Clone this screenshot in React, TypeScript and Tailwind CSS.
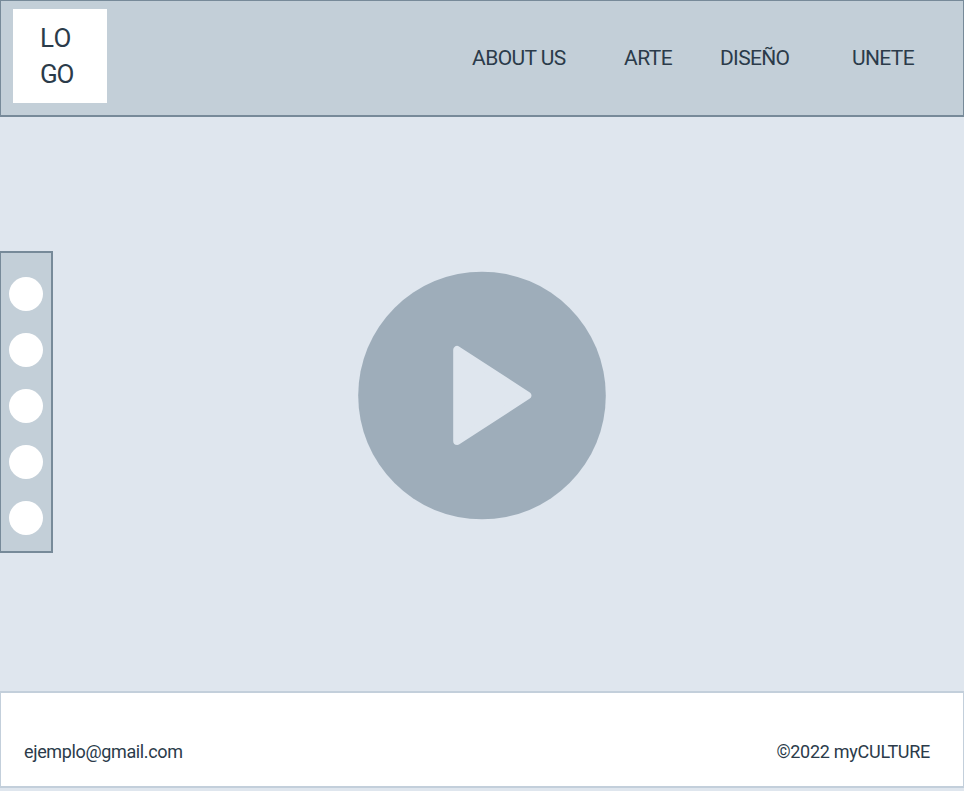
const DOTS = [0, 1, 2, 3, 4];

function Header() {
  return (
    <header className="flex h-[117px] shrink-0 items-start border-x border-t border-b-2 border-[#778a99] bg-[#c3cfd8]">
      <div className="ml-3 mt-2 h-[94px] w-[94px] bg-white pl-[27px] pt-[11px] text-[26px] leading-9">
        <div className="tracking-[0.2px]">LO</div>
        <div className="tracking-[-1.2px]">GO</div>
      </div>
      <nav className="ml-[365px] flex pt-[43px] text-[21px] leading-7 whitespace-nowrap">
        <a className="w-[152px] tracking-[-0.57px]">ABOUT US</a>
        <a className="w-24 tracking-[-0.5px]">ARTE</a>
        <a className="w-[132px] tracking-[-0.68px]">DISEÑO</a>
        <a className="tracking-[-0.65px]">UNETE</a>
      </nav>
    </header>
  );
}

function SocialBar() {
  return (
    <aside className="mt-[134px] flex h-[302px] w-[53px] flex-col items-center gap-[22px] border-y-2 border-l border-r-2 border-[#778a99] bg-[#c3cfd8] pt-6">
      {DOTS.map((dot) => (
        <span key={dot} className="h-[34px] w-[34px] shrink-0 rounded-full bg-white" />
      ))}
    </aside>
  );
}

function PlayButton() {
  return (
    <svg className="ml-[305px] mt-[154px] h-[249px] w-[248px]" viewBox="0 0 248 249">
      <circle cx="124" cy="124.5" r="123.8" fill="#9eadba" />
      <path
        d="M99.200 79V170L169.300 124.500Z"
        fill="#dfe6ee"
        stroke="#dfe6ee"
        strokeWidth="8"
        strokeLinejoin="round"
      />
    </svg>
  );
}

function Footer() {
  return (
    <footer className="flex h-[97px] shrink-0 justify-between border-x border-y-2 border-[#c3cfdb] bg-white pl-[23px] pr-[33px] pt-[47px] text-[18px] leading-6 whitespace-nowrap">
      <span className="tracking-[-0.36px]">ejemplo@gmail.com</span>
      <span className="tracking-[-0.28px]">©2022 myCULTURE</span>
    </footer>
  );
}

export default function App() {
  return (
    <div className="h-[792px] w-[964px] overflow-hidden bg-white font-['Roboto',sans-serif] text-[#2b3b4a]">
      <div className="flex h-[791px] flex-col bg-[#dfe6ee]">
        <Header />
        <main className="flex h-[574px] shrink-0 items-start">
          <SocialBar />
          <PlayButton />
        </main>
        <Footer />
      </div>
    </div>
  );
}
